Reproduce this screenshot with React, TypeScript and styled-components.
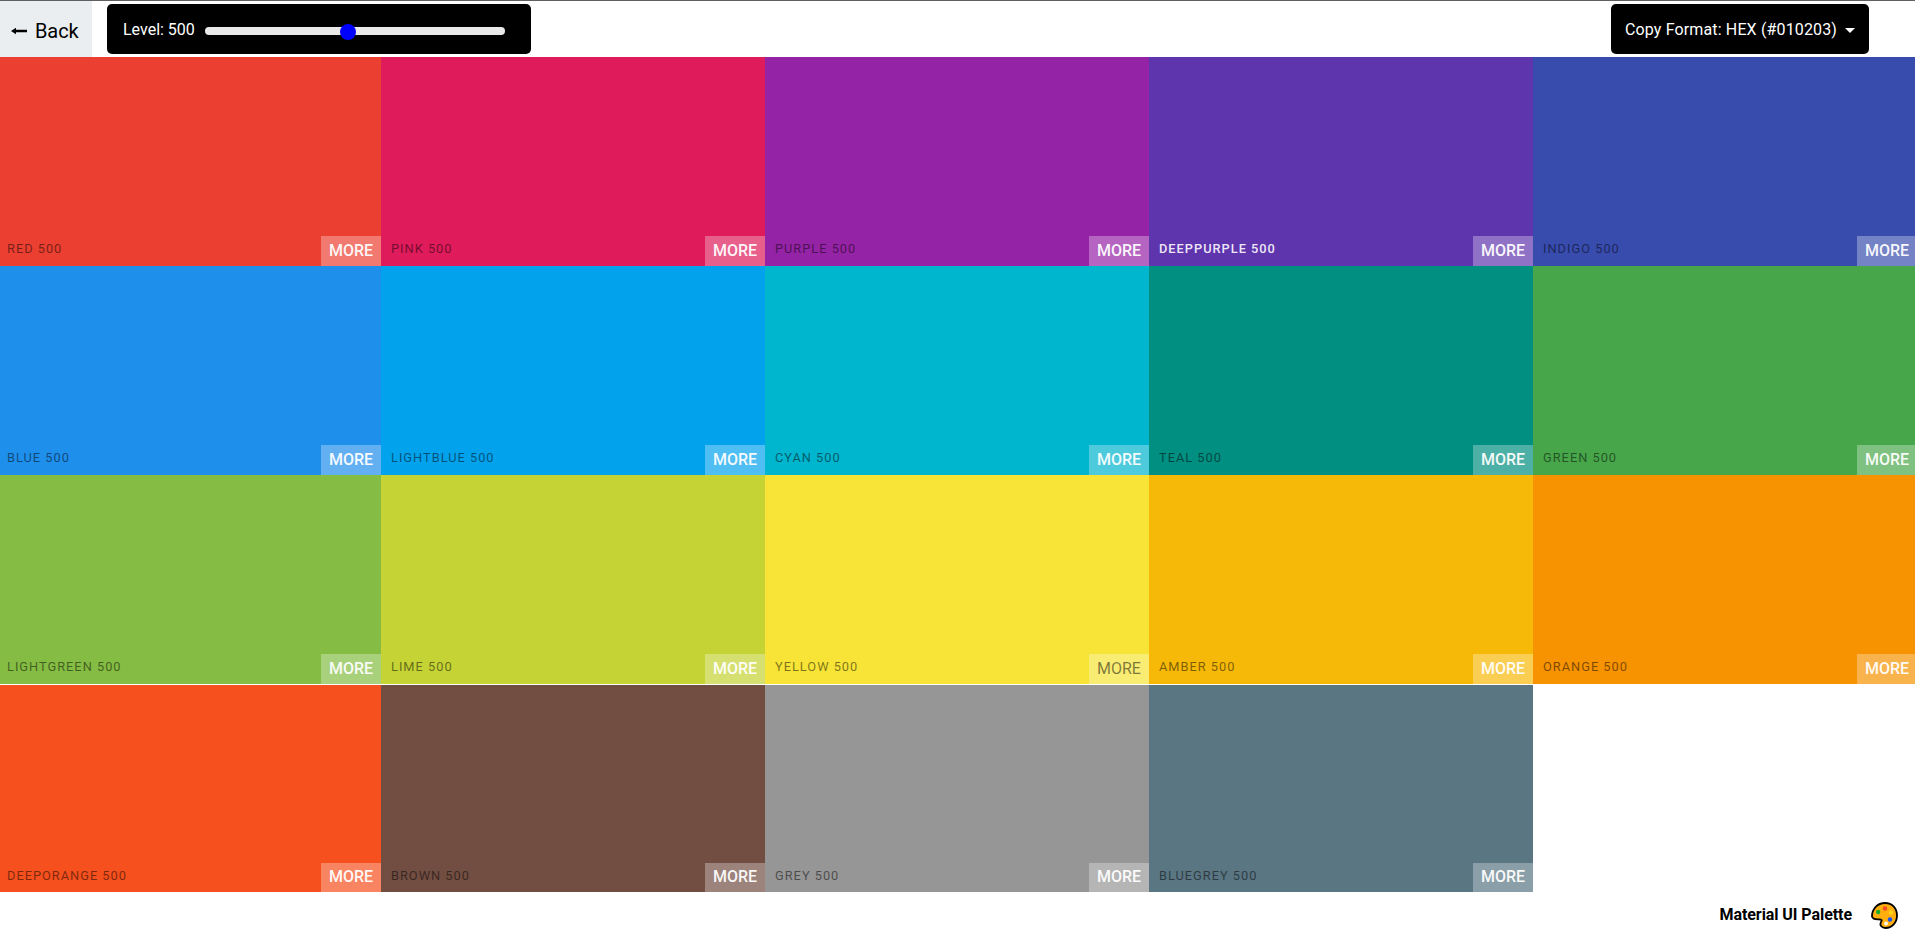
import React from 'react';
import styled, { createGlobalStyle } from 'styled-components';

const GlobalStyle = createGlobalStyle`
  *, *::before, *::after { box-sizing: border-box; }
  body { margin: 0; background: #fff; font-family: Roboto, sans-serif; overflow: hidden; }
  button { font-family: inherit; border: 0; margin: 0; }
`;

const Page = styled.div`
  display: flex;
  flex-direction: column;
  height: 938px;
  overflow: hidden;
`;

const Header = styled.header`
  display: flex;
  flex: none;
  height: 57px;
  border-top: 1px solid #606060;
`;

const BackButton = styled.button`
  display: flex;
  align-items: center;
  width: 92px;
  height: 56px;
  padding: 4px 0 0 11px;
  gap: 7px;
  background: #eaeef1;
  color: #000;
  font-size: 20px;
  font-weight: 400;
  letter-spacing: -0.1px;
`;

const Panel = styled.div`
  display: flex;
  align-items: center;
  height: 50px;
  margin-top: 3px;
  background: #000;
  color: #fff;
  border-radius: 5px;
  font-size: 16px;
  line-height: 20px;
`;

const LevelPanel = styled(Panel)`
  width: 424px;
  margin-left: 15px;
  padding-left: 16px;
`;

const LevelText = styled.span`
  width: 82px;
  padding-top: 2px;
`;

const Track = styled.div`
  display: flex;
  align-items: center;
  width: 300px;
  height: 8px;
  margin-top: 4px;
  padding-left: 135px;
  border-radius: 4px;
  background: #e9e9e9;
`;

const Thumb = styled.div`
  flex: none;
  width: 16px;
  height: 16px;
  margin-top: 2px;
  border-radius: 50%;
  background: #00f;
`;

const FormatPanel = styled(Panel)`
  width: 258px;
  margin-left: auto;
  margin-right: 46px;
  padding: 2px 0 0 14px;
  gap: 9px;
  letter-spacing: 0.14px;
`;

const Caret = styled.span`
  margin-left: -1px;
  border: 5px solid transparent;
  border-top-color: #fff;
  border-bottom: 0;
`;

const Grid = styled.main`
  display: grid;
  flex: none;
  width: 1917px;
  grid-template-columns: 381px repeat(4, 384px);
  grid-template-rows: repeat(3, 209px) 208px;
`;

const Name = styled.span<{ $light: boolean }>`
  margin-bottom: 10px;
  font-size: 12.8px;
  line-height: 15px;
  letter-spacing: 1px;
  text-transform: uppercase;
  white-space: nowrap;
  font-weight: ${p => (p.$light ? 500 : 400)};
  color: ${p => (p.$light ? 'rgba(255,255,255,.9)' : 'rgba(0,0,0,.5)')};
`;

const More = styled.button<{ $dark: boolean }>`
  width: 60px;
  height: 30px;
  padding: 0;
  font-size: 16px;
  line-height: 30px;
  font-weight: ${p => (p.$dark ? 400 : 500)};
  color: ${p => (p.$dark ? 'rgba(0,0,0,.5)' : 'rgba(255,255,255,.95)')};
  background: rgba(255, 255, 255, 0.3);
`;

const Swatch = styled.section<{ $color: string; $first: boolean; $last: boolean }>`
  display: flex;
  align-items: flex-end;
  justify-content: space-between;
  padding-left: ${p => (p.$first ? 7 : 10)}px;
  margin-top: ${p => (p.$last ? 1 : 0)}px;
  background: ${p => p.$color};

  ${Name} { margin-bottom: ${p => (p.$last ? 9 : 10)}px; }
  ${More} {
    height: ${p => (p.$last ? 29 : 30)}px;
    padding-bottom: ${p => (p.$last ? 1 : 0)}px;
    line-height: ${p => (p.$last ? 28 : 30)}px;
  }
`;

const Footer = styled.footer`
  display: flex;
  flex: 1;
  align-items: center;
  justify-content: flex-end;
  padding: 0 17px 0 0;
  gap: 19px;
  color: #000;
  font-size: 16px;
  font-weight: 700;
  letter-spacing: -0.07px;
`;

const FooterTitle = styled.span`
  padding-bottom: 2px;
`;

const colors: [string, string][] = [
  ['red', '#eb3f31'], ['pink', '#e01b5b'], ['purple', '#9523a6'], ['deeppurple', '#5f35ae'], ['indigo', '#384cae'],
  ['blue', '#1f8fec'], ['lightblue', '#03a2ed'], ['cyan', '#00b5ce'], ['teal', '#008f80'], ['green', '#48a64a'],
  ['lightgreen', '#85bc43'], ['lime', '#c5d334'], ['yellow', '#f7e436'], ['amber', '#f6b908'], ['orange', '#f79200'],
  ['deeporange', '#f6501e'], ['brown', '#724e42'], ['grey', '#969696'], ['bluegrey', '#5a7683'],
];

const BackArrow = () => (
  <svg width="17" height="8" viewBox="0 0 17 8">
    <path d="M0 4 5 .8V2.7H16V5.3H5V7.2Z" fill="#000" />
  </svg>
);

const PaletteIcon = () => (
  <svg width="27" height="27" viewBox="0 0 27 27">
    <path
      d="M1 14.5C1 7 6.500 1 14 1S26 6.500 26 13.500 21 26 14.500 26C10.500 26 8.700 23.200 9.700 20.700C10.500 18.700 11.500 18 9.500 17.500C6.500 17 2.200 18.500 1 14.500Z"
      fill="#ffae0d" stroke="#000" strokeWidth="1.8"
    />
    <circle cx="14" cy="6.500" r="2.200" fill="#f44a26" />
    <circle cx="7.200" cy="10" r="2.200" fill="#1aab2a" />
    <circle cx="20" cy="10.500" r="2.200" fill="#ffd51a" />
    <circle cx="19" cy="17.500" r="2.200" fill="#1852f5" />
    <circle cx="15" cy="21.500" r="2" fill="#fff6e8" />
  </svg>
);

export default function App() {
  return (
    <Page>
      <GlobalStyle />
      <Header>
        <BackButton><BackArrow />Back</BackButton>
        <LevelPanel>
          <LevelText>Level: 500</LevelText>
          <Track><Thumb /></Track>
        </LevelPanel>
        <FormatPanel>Copy Format: HEX (#010203)<Caret /></FormatPanel>
      </Header>
      <Grid>
        {colors.map(([name, color], i) => (
          <Swatch key={name} $color={color} $first={i % 5 === 0} $last={i >= 15}>
            <Name $light={name === 'deeppurple'}>{name} 500</Name>
            <More $dark={name === 'yellow'}>MORE</More>
          </Swatch>
        ))}
      </Grid>
      <Footer><FooterTitle>Material UI Palette</FooterTitle><PaletteIcon /></Footer>
    </Page>
  );
}
